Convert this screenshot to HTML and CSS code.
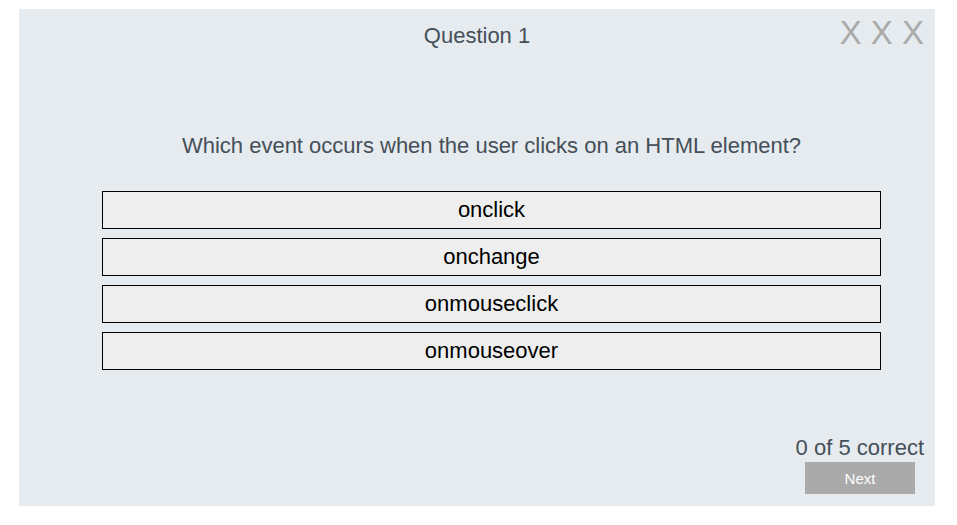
FILE: index.html
```html
<!DOCTYPE html>
<html>
<head>
<meta charset="utf-8">
<link rel="stylesheet" href="styles.css">
</head>
<body>
<div class="quiz">
  <div class="header">
    <div class="title">Question 1</div>
    <div class="lives">X X X</div>
  </div>
  <div class="main">
    <div class="question">Which event occurs when the user clicks on an HTML element?</div>
    <div class="options">
      <div class="option">onclick</div>
      <div class="option">onchange</div>
      <div class="option">onmouseclick</div>
      <div class="option">onmouseover</div>
    </div>
  </div>
  <div class="footer">
    <div class="score">0 of 5 correct</div>
    <button class="next">Next</button>
  </div>
</div>
</body>
</html>
```
FILE: styles.css
```css
html, body {
  margin: 0;
  padding: 0;
  background: #fff;
}
body {
  font-family: "Liberation Sans", Arial, sans-serif;
}
.quiz {
  margin: 9px 0 0 19px;
  width: 916px;
  height: 497px;
  background: #e6ebef;
  display: flex;
  flex-direction: column;
  box-sizing: border-box;
  color: #454f59;
}
.header {
  position: relative;
  padding-top: 15px;
  text-align: center;
}
.title {
  font-size: 22px;
  line-height: 24px;
}
.lives {
  position: absolute;
  top: 5px;
  right: 11px;
  font-size: 33px;
  line-height: 38px;
  color: #aaaaaa;
}
.main {
  padding-left: 29px;
  margin-top: 86px;
  display: flex;
  flex-direction: column;
  align-items: center;
}
.question {
  font-size: 22px;
  line-height: 24px;
  text-align: center;
}
.options {
  margin-top: 33px;
  width: 779px;
  display: flex;
  flex-direction: column;
  gap: 9px;
}
.option {
  height: 38px;
  box-sizing: border-box;
  border: 1px solid #000;
  background: #eeeeee;
  color: #000;
  font-size: 22px;
  line-height: 36px;
  text-align: center;
}
.footer {
  margin-top: auto;
  padding: 0 11px 12px 0;
  display: flex;
  flex-direction: column;
  align-items: flex-end;
}
.score {
  font-size: 22px;
  line-height: 24px;
}
.next {
  margin-top: 2px;
  margin-right: 9px;
  width: 110px;
  height: 32px;
  border: none;
  background: #aaaaaa;
  color: #fff;
  font-family: "Liberation Sans", Arial, sans-serif;
  font-size: 15px;
  padding: 0;
}
```
